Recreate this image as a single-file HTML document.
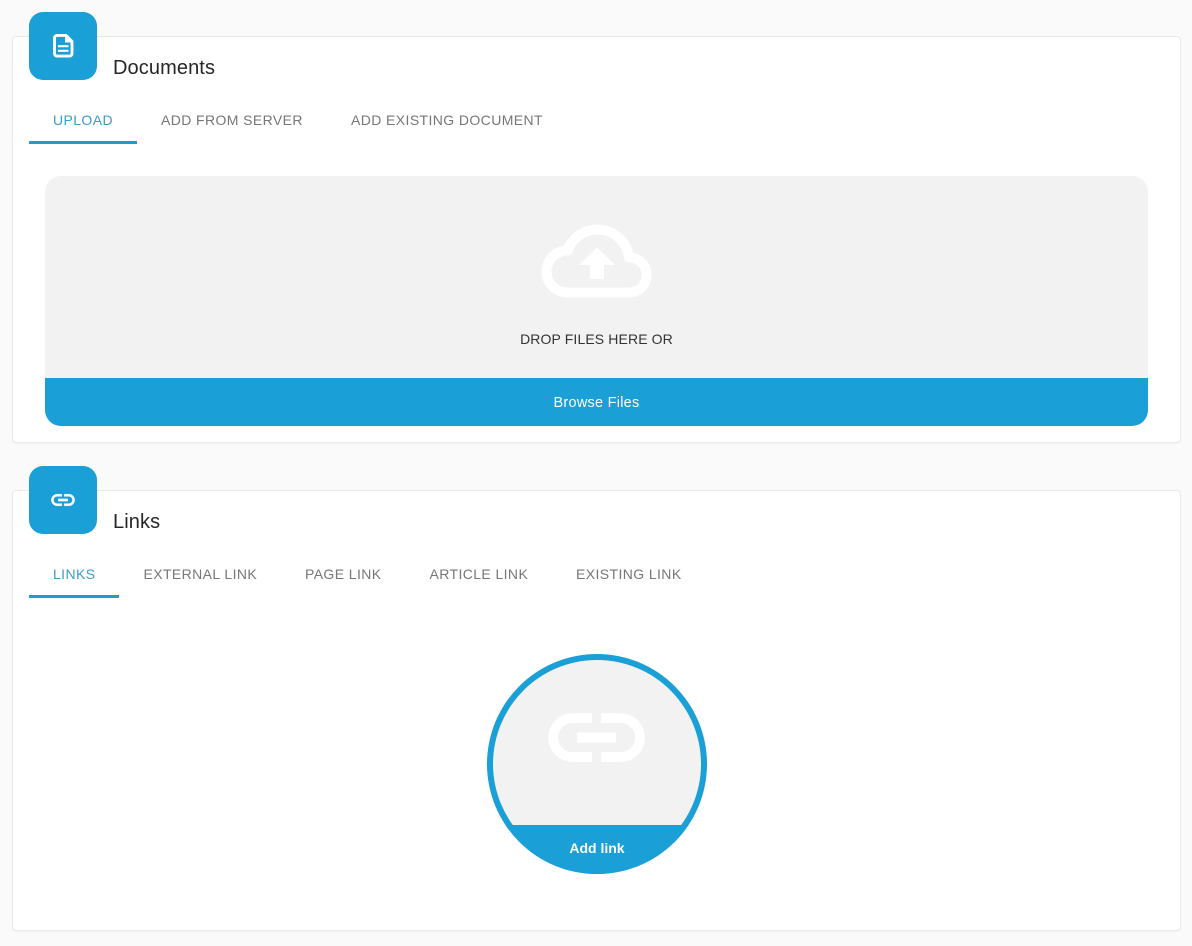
<!DOCTYPE html>
<html lang="en">
<head>
<meta charset="utf-8">
<title>Documents and Links</title>
<style>
html,body{margin:0;padding:0}
body{width:1192px;height:946px;position:relative;overflow:hidden;background:#fafafa;font-family:"Liberation Sans",sans-serif}
.card{position:absolute;left:12px;width:1169px;box-sizing:border-box;background:#fff;border:1px solid #e9e9e9;border-radius:4px;box-shadow:0 1px 1px rgba(0,0,0,.03)}
.badge{position:absolute;left:29px;width:68px;height:68px;background:#1a9fd6;border-radius:14px}
.badge svg{position:absolute;left:20px;top:20px;width:28px;height:28px}
.title{position:absolute;left:113px;font-size:20px;line-height:24px;letter-spacing:.1px;color:#262626;white-space:nowrap}
.tab{position:absolute;font-size:14px;line-height:20px;letter-spacing:.4px;color:#767676;white-space:nowrap}
.tab.on{color:#3c9dcc}
.bar{position:absolute;height:3px;background:#1f9dd0}
.drop{position:absolute;left:45px;top:176px;width:1103px;height:250px;background:#f2f2f2;border-radius:16px;overflow:hidden}
.drop svg{position:absolute;left:490px;top:39px;width:125px;height:90px}
.droptext{position:absolute;left:0;width:100%;top:153px;text-align:center;font-size:14px;line-height:20px;letter-spacing:.12px;color:#333}
.browse{position:absolute;left:0;top:202px;width:100%;height:48px;background:#1a9fd6;color:#fff;text-align:center;font-size:14.5px;letter-spacing:.25px;line-height:50px}
.circle{position:absolute;left:487px;top:654px;width:220px;height:220px;border-radius:50%;background:#1a9fd6;overflow:hidden}
.disc{position:absolute;left:6px;top:6px;width:208px;height:208px;border-radius:50%;background:#f2f2f2}
.circle svg{position:absolute;left:52.4px;top:25.6px;width:115.2px;height:115.2px;fill:#fff}
.add{position:absolute;left:0;top:171px;width:220px;height:49px;background:#1a9fd6;color:#fff;text-align:center;font-size:14px;font-weight:bold;line-height:46px}
</style>
</head>
<body>
<div class="card" style="top:36px;height:407px"></div>
<div class="badge" style="top:12px"><svg viewBox="0 0 28 28"><path d="M17 3.4H8a2.5 2.5 0 0 0-2.5 2.5V21.6a2.5 2.5 0 0 0 2.5 2.5H20.5a2.5 2.5 0 0 0 2.5-2.5V9.4Z" fill="none" stroke="#fff" stroke-width="2.9" stroke-linejoin="round"/><path d="M16 4H17.5L22.5 9V10.5H16Z" fill="#fff"/><path d="M9 14.2H19.5M9 18.8H19.5" fill="none" stroke="#fff" stroke-width="2.2"/></svg></div>
<div class="title" style="top:56px">Documents</div>
<div class="tab on" style="left:53px;top:110px">UPLOAD</div>
<div class="tab" style="left:161px;top:110px">ADD FROM SERVER</div>
<div class="tab" style="left:351px;top:110px">ADD EXISTING DOCUMENT</div>
<div class="bar" style="left:29px;top:141px;width:108px"></div>
<div class="drop">
  <svg viewBox="535 215 125 90"><path d="M567.5 292.5H629.5A17.5 17.5 0 0 0 629 257.5A31.8 31.8 0 0 0 567.5 250.5A21 21 0 0 0 567.5 292.5Z" fill="none" stroke="#fff" stroke-width="10" stroke-linejoin="round"/><path d="M597 247.5L579 265H590V279H604V265H615Z" fill="#fff"/></svg>
  <div class="droptext">DROP FILES HERE OR</div>
  <div class="browse">Browse Files</div>
</div>

<div class="card" style="top:490px;height:441px"></div>
<div class="badge" style="top:466px"><svg viewBox="0 0 24 24" fill="#fff" stroke="#fff" stroke-width=".3"><path d="M3.9 12c0-1.71 1.39-3.1 3.1-3.1h4V7H7c-2.76 0-5 2.24-5 5s2.24 5 5 5h4v-1.9H7c-1.71 0-3.1-1.39-3.1-3.1zM8 13h8v-2H8v2zm9-6h-4v1.9h4c1.71 0 3.1 1.39 3.1 3.1s-1.39 3.1-3.1 3.1h-4V17h4c2.76 0 5-2.24 5-5s-2.24-5-5-5z"/></svg></div>
<div class="title" style="top:510px">Links</div>
<div class="tab on" style="left:53px;top:564px">LINKS</div>
<div class="tab" style="left:143.5px;top:564px">EXTERNAL LINK</div>
<div class="tab" style="left:305px;top:564px">PAGE LINK</div>
<div class="tab" style="left:429.5px;top:564px">ARTICLE LINK</div>
<div class="tab" style="left:576px;top:564px">EXISTING LINK</div>
<div class="bar" style="left:29px;top:595px;width:90px"></div>
<div class="circle">
  <div class="disc"></div>
  <svg viewBox="0 0 24 24" stroke="#fff" stroke-width=".12"><path d="M3.9 12c0-1.71 1.39-3.1 3.1-3.1h4V7H7c-2.76 0-5 2.24-5 5s2.24 5 5 5h4v-1.9H7c-1.71 0-3.1-1.39-3.1-3.1zM8 13h8v-2H8v2zm9-6h-4v1.9h4c1.71 0 3.1 1.39 3.1 3.1s-1.39 3.1-3.1 3.1h-4V17h4c2.76 0 5-2.24 5-5s-2.24-5-5-5z"/></svg>
  <div class="add">Add link</div>
</div>
</body>
</html>
